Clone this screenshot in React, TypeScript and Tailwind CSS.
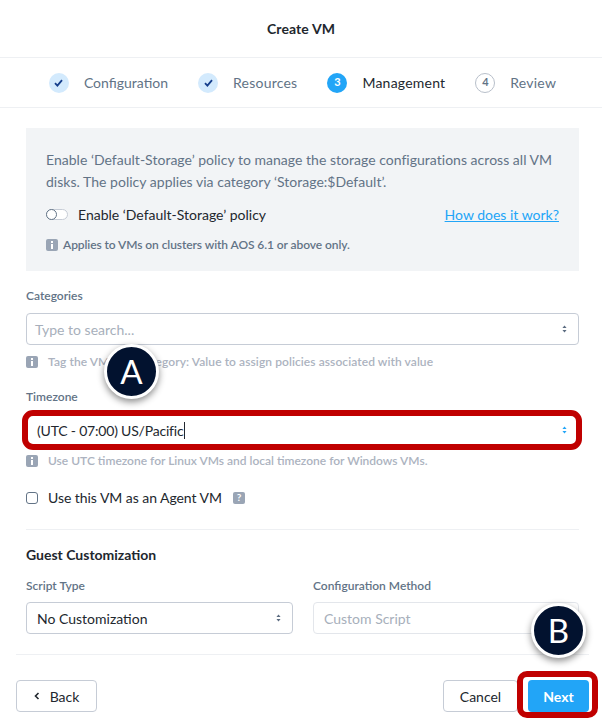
const font = "font-['Lato','Liberation_Sans',sans-serif]";

function Chevrons({ color = "#5b6b80" }: { color?: string }) {
  return (
    <svg width="5" height="8" viewBox="0 0 6 10" fill={color}>
      <path d="M3 0.5 5.6 3.8H0.4Z" />
      <path d="M3 9.5 0.4 6.2H5.6Z" />
    </svg>
  );
}

function Check() {
  return (
    <svg width="9" height="8" viewBox="0 0 9 8" fill="none" stroke="#153e8c" strokeWidth="1.8">
      <path d="M1 4.2 3.4 6.6 8 1.2" />
    </svg>
  );
}

function Info() {
  return (
    <span className="flex h-3 w-3 shrink-0 flex-col items-center justify-center gap-[1px] rounded-[2px] bg-[#9aa5b5]">
      <span className="h-[2px] w-[2px] bg-white" />
      <span className="h-[5px] w-[2px] bg-white" />
    </span>
  );
}

function Step({ label, icon, state, wide }: { label: string; icon: React.ReactNode; state: "done" | "active" | "todo"; wide?: boolean }) {
  const circle =
    state === "done"
      ? "bg-[#d3eafd]"
      : state === "active"
        ? "bg-[#22a5f7] text-white"
        : "border border-[#b8bfca] bg-white text-[#627386]";
  return (
    <div className="flex items-center gap-[15px]">
      <span className={`flex h-5 w-5 items-center justify-center rounded-full text-[11px] font-bold ${circle}`}>{icon}</span>
      <span className={`text-[14px] ${wide ? "tracking-[0.22px]" : ""} ${state === "active" ? "text-[#22272e]" : "text-[#627386]"}`}>{label}</span>
    </div>
  );
}

function Help({ children }: { children: React.ReactNode }) {
  return (
    <div className="flex items-center gap-[10px] text-[12px] font-semibold text-[#acb3c0]">
      <Info />
      <span>{children}</span>
    </div>
  );
}

function Marker({ letter, className }: { letter: string; className: string }) {
  return (
    <div
      className={`absolute flex h-[55px] w-[55px] items-center justify-center rounded-full border-[3px] border-white bg-[#02122f] text-[33px] text-white shadow-[0_3px_7px_rgba(0,0,0,0.45)] ${className}`}
    >
      {letter}
    </div>
  );
}

export default function App() {
  return (
    <div className={`relative h-[723px] w-[602px] overflow-hidden bg-white ${font}`}>
      <header className="flex h-[58px] items-center justify-center border-b border-[#eef0f3] text-[14px] font-bold tracking-[0.1px] text-[#22272e]">
        Create VM
      </header>

      <nav className="flex h-[50px] items-center justify-center gap-[30px] border-b border-[#eef0f3] pl-[3px]">
        <Step label="Configuration" icon={<Check />} state="done" />
        <Step label="Resources" icon={<Check />} state="done" wide />
        <Step label="Management" icon="3" state="active" wide />
        <Step label="Review" icon="4" state="todo" wide />
      </nav>

      <main className="pl-[26px] pr-[23px] pt-5">
        <section className="flex h-[143px] flex-col bg-[#f2f4f6] px-5 pt-[21px]">
          <p className="text-[14px] leading-[22px] tracking-[0.02px] text-[#627386]">
            Enable ‘Default-Storage’ policy to manage the storage configurations across all VM disks. The policy applies via category ‘Storage:$Default’.
          </p>
          <div className="mt-[11px] flex items-center justify-between">
            <div className="flex items-center gap-[10px]">
              <span className="flex h-[11px] w-[22px] items-center rounded-full border border-[#c6ccd6] bg-white">
                <span className="-ml-px h-[11px] w-[11px] rounded-full border border-[#627386] bg-white" />
              </span>
              <span className="text-[14px] text-[#22272e]">Enable ‘Default-Storage’ policy</span>
            </div>
            <a className="text-[14px] text-[#22a5f7] underline">How does it work?</a>
          </div>
          <div className="mt-[11px] flex items-center gap-[5px] text-[12px] font-semibold tracking-[-0.08px] text-[#627386]">
            <Info />
            <span>Applies to VMs on clusters with AOS 6.1 or above only.</span>
          </div>
        </section>

        <label className="mt-[17px] block text-[12px] font-semibold leading-[16px] text-[#627386]">Categories</label>
        <div className="mt-[9px] flex h-[32px] items-center justify-between rounded-[4px] border border-[#c6ccd6] pl-2 pr-[11px] text-[14px] text-[#a7afbb]">
          <span>Type to search...</span>
          <Chevrons />
        </div>
        <div className="mt-[8px]">
          <Help>
            <span className="tracking-[0.08px]">Tag the VM with category: Value to assign policies associated with value</span>
          </Help>
        </div>

        <label className="mt-[18px] block text-[12px] font-semibold leading-[16px] text-[#627386]">Timezone</label>
        <div className="mt-[9px] flex h-[32px] items-center justify-between rounded-[4px] border border-[#7ab9ec] pl-[10px] pr-[11px] text-[14px] tracking-[-0.2px] text-[#22272e]">
          <span className="border-r border-[#22272e] pr-px leading-[17px]">(UTC - 07:00) US/Pacific</span>
          <Chevrons color="#22a5f7" />
        </div>
        <div className="mt-[6px]">
          <Help>Use UTC timezone for Linux VMs and local timezone for Windows VMs.</Help>
        </div>

        <div className="mt-[17px] flex items-center text-[14px] tracking-[-0.05px] text-[#22272e]">
          <span className="h-3 w-3 rounded-[3px] border border-[#627386] bg-white" />
          <span className="ml-[10px]">Use this VM as an Agent VM</span>
          <span className="ml-[11px] flex h-3 w-3 items-center justify-center rounded-[2px] bg-[#9aa5b5] text-[10px] font-bold text-white">?</span>
        </div>

        <div className="mt-[21px] border-t border-[#eef0f3]" />

        <h2 className="mt-[16px] text-[14px] font-bold leading-[18px] text-[#22272e]">Guest Customization</h2>

        <div className="mt-[14px] grid grid-cols-[267px_266px] gap-5">
          <div>
            <label className="block text-[12px] font-semibold leading-[16px] text-[#627386]">Script Type</label>
            <div className="mt-2 flex h-[32px] items-center justify-between rounded-[4px] border border-[#c6ccd6] pl-[10px] pr-[11px] text-[14px] text-[#22272e]">
              <span>No Customization</span>
              <Chevrons />
            </div>
          </div>
          <div>
            <label className="block text-[12px] font-semibold leading-[16px] text-[#627386]">Configuration Method</label>
            <div className="mt-2 flex h-[32px] items-center rounded-[4px] border border-[#e3e6eb] pl-[10px] text-[14px] text-[#a7afbb]">
              Custom Script
            </div>
          </div>
        </div>
      </main>

      <footer className="ml-4 mr-[13px] mt-[20px] flex items-center justify-between border-t border-[#eef0f3] pt-[25px]">
        <button className="flex h-[32px] w-[81px] items-center justify-center gap-[10px] rounded-[4px] border border-[#c6ccd6] text-[14px] text-[#22272e]">
          <svg width="6" height="8" viewBox="0 0 6 8" fill="none" stroke="#22272e" strokeWidth="1.6">
            <path d="M4.5 1 1.5 4 4.5 7" />
          </svg>
          Back
        </button>
        <div className="flex gap-[10px]">
          <button className="h-[32px] w-[75px] rounded-[4px] border border-[#c6ccd6] text-[14px] text-[#22272e]">Cancel</button>
          <button className="h-[32px] w-[61px] rounded-[4px] bg-[#22a5f7] text-[14px] font-bold text-white">Next</button>
        </div>
      </footer>

      <div className="absolute left-[22px] top-[410px] h-[40px] w-[560px] rounded-[11px] border-[6px] border-[#c00000]" />
      <div className="absolute left-[517px] top-[671px] h-[47px] w-[81px] rounded-[10px] border-[6px] border-[#c00000]" />
      <Marker letter="A" className="left-[104px] top-[344px]" />
      <Marker letter="B" className="left-[531px] top-[603px]" />
    </div>
  );
}
